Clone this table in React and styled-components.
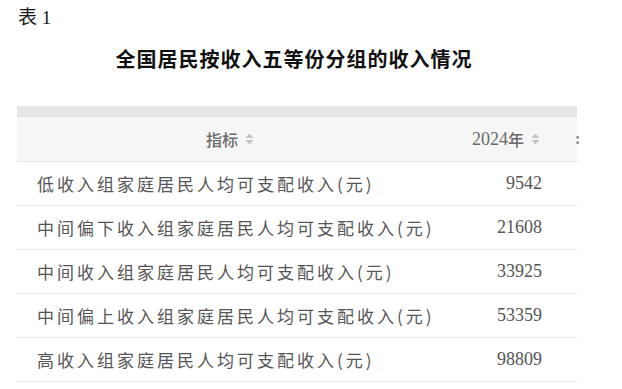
import React from "react";
import styled, { createGlobalStyle } from "styled-components";

const rows = [
  { name: "低收入组家庭居民人均可支配收入(元)", value: "9542" },
  { name: "中间偏下收入组家庭居民人均可支配收入(元)", value: "21608" },
  { name: "中间收入组家庭居民人均可支配收入(元)", value: "33925" },
  { name: "中间偏上收入组家庭居民人均可支配收入(元)", value: "53359" },
  { name: "高收入组家庭居民人均可支配收入(元)", value: "98809" },
];

const SortIcon = () => (
  <SortSvg width="9" height="12" viewBox="0 0 9 12">
    <path d="M4.5 0.5 L8.5 5 L0.5 5 Z" fill="#c4c4c4" />
    <path d="M4.5 11.5 L8.5 7 L0.5 7 Z" fill="#c4c4c4" />
  </SortSvg>
);

export default function App() {
  return (
    <Page>
      <GlobalStyle />
      <Label>表 1</Label>
      <Frame>
        <Heading>全国居民按收入五等份分组的收入情况</Heading>
        <TopBar />
        <Table>
          <HeadCell align="center">
            指标
            <SortIcon />
          </HeadCell>
          <HeadCell align="right" pad="22px">
            <Num>2024</Num>年
            <SortIcon />
          </HeadCell>
          <HeadCell align="left" pad="0">
            <Edge>:</Edge>
          </HeadCell>
          {rows.map((r) => (
            <React.Fragment key={r.name}>
              <NameCell>{r.name}</NameCell>
              <ValueCell>{r.value}</ValueCell>
              <EmptyCell />
            </React.Fragment>
          ))}
        </Table>
      </Frame>
    </Page>
  );
}

const GlobalStyle = createGlobalStyle`
  html, body {
    margin: 0;
    padding: 0;
    background: #ffffff;
  }
`;

const Page = styled.div`
  width: 622px;
  height: 389px;
  overflow: hidden;
  padding: 5px 0 0 17px;
  box-sizing: border-box;
  background: #ffffff;
  font-family: "Liberation Serif", "Noto Sans CJK SC", serif;
`;

const Label = styled.div`
  font-size: 19px;
  line-height: 26px;
  color: #1a1a1a;
  padding-left: 1px;
`;

const Frame = styled.div`
  width: 560px;
`;

const Heading = styled.h1`
  margin: 13px 0 0;
  text-align: center;
  font-family: "Noto Sans CJK SC", sans-serif;
  font-size: 20px;
  font-weight: 700;
  letter-spacing: 1px;
  line-height: 30px;
  color: #111111;
  padding-right: 6px;
`;

const TopBar = styled.div`
  margin-top: 32px;
  height: 11px;
  background: #e6e6e6;
`;

const Table = styled.div`
  display: grid;
  grid-template-columns: 426px 119px 15px;
`;

const HeadCell = styled.div`
  display: flex;
  align-items: center;
  justify-content: ${({ align }) =>
    align === "center" ? "center" : align === "right" ? "flex-end" : "flex-start"};
  height: 45px;
  background: #f6f6f6;
  border-bottom: 1px solid #e8e8e8;
  padding: ${({ align, pad }) =>
    align === "right" ? `0 ${pad} 0 0` : align === "left" ? `0 0 0 ${pad}` : "0"};
  font-family: "Noto Sans CJK SC", sans-serif;
  font-size: 16px;
  font-weight: 500;
  color: #6a6a6a;
  box-sizing: border-box;
`;

const Num = styled.span`
  font-family: "Liberation Serif", serif;
  font-size: 18px;
  font-weight: 400;
`;

const Edge = styled.span`
  font-family: "Liberation Serif", serif;
  font-size: 16px;
  font-weight: 700;
  color: #777777;
  margin-left: 13px;
`;

const SortSvg = styled.svg`
  margin-left: 7px;
  flex: none;
`;

const NameCell = styled.div`
  display: flex;
  align-items: center;
  height: 44px;
  padding-left: 20px;
  border-bottom: 1px solid #e6e6e6;
  font-family: "Noto Sans CJK SC", sans-serif;
  font-size: 17px;
  letter-spacing: 3px;
  color: #555555;
  white-space: nowrap;
  box-sizing: border-box;
`;

const ValueCell = styled.div`
  display: flex;
  align-items: center;
  justify-content: flex-end;
  height: 44px;
  padding-right: 20px;
  border-bottom: 1px solid #e6e6e6;
  font-family: "Liberation Serif", serif;
  font-size: 18px;
  color: #555555;
  box-sizing: border-box;
`;

const EmptyCell = styled.div`
  height: 44px;
  border-bottom: 1px solid #e6e6e6;
  box-sizing: border-box;
`;
